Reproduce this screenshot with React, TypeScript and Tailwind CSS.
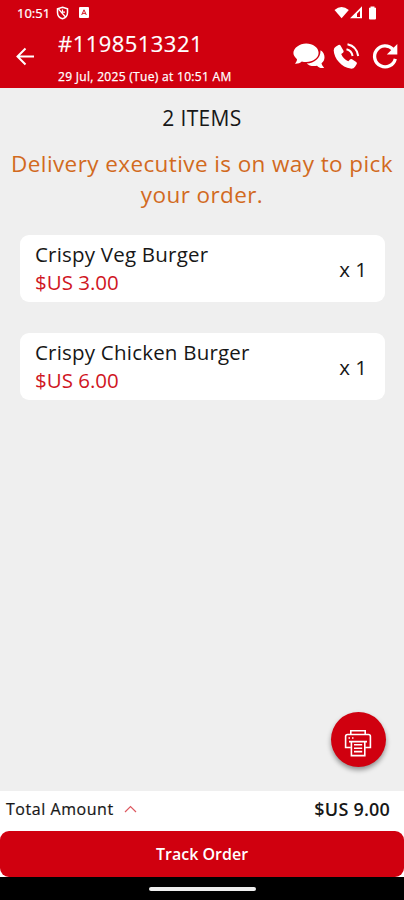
import React from 'react';

const items = [
  { name: 'Crispy Veg Burger', price: '$US 3.00', qty: 'x 1' },
  { name: 'Crispy Chicken Burger', price: '$US 6.00', qty: 'x 1' },
];

function StatusBar() {
  return (
    <div className="flex h-[25px] items-center pl-[17px] pr-[26px] text-white">
      <span className="w-[34px] whitespace-nowrap font-['Noto_Sans'] text-[13px] leading-[18px] [-webkit-text-stroke:0.2px_white]">10:51</span>
      <svg className="ml-[5px]" width="13" height="14" viewBox="0 0 13 14" fill="none" stroke="white" strokeWidth="1.5">
        <path d="M6.5 1.2 11.5 2.8V6.4C11.5 9.5 9.4 11.8 6.5 12.8 3.6 11.8 1.5 9.5 1.5 6.4V2.8Z" />
        <path d="M2.5 3 9.5 11M6.5 3.5V6.2H9" strokeWidth="1.2" />
      </svg>
      <svg className="ml-[10px]" width="10" height="11" viewBox="0 0 10 11">
        <rect width="10" height="11" rx="1" fill="white" />
        <path d="M2.7 8 5 2.8 7.3 8M3.5 6.4H6.5" stroke="#d0000f" strokeWidth="0.9" fill="none" />
      </svg>
      <svg className="ml-auto" width="44" height="14" viewBox="0 0 44 14" fill="white">
        <path d="M.5 4Q7.5-1.8 14.8 4L7.6 12.3Z" />
        <path fillRule="evenodd" d="M16 12.3 28 .3V12.3ZM23 7.8V11H26V4.8Z" />
        <path d="M36.5.5H40.5V1.8H42V12.5Q42 13.5 41 13.5H36Q35 13.5 35 12.5V1.8H36.5Z" />
      </svg>
    </div>
  );
}

function Header() {
  return (
    <header className="h-[88px] shrink-0 bg-[#d0000f] text-white">
      <StatusBar />
      <div className="flex h-[63px]">
        <svg className="ml-[16px] mt-[22px] shrink-0" width="19" height="19" viewBox="0 0 19 19" fill="none" stroke="white" strokeWidth="2">
          <path d="M18 9.5H2M9.5 1.5 1.5 9.5 9.5 17.5" />
        </svg>
        <div className="ml-[23px] whitespace-nowrap">
          <div className="mt-[3px] text-[22px] leading-[30px] tracking-[0.45px] [-webkit-text-stroke:0.15px_white]">#1198513321</div>
          <div className="mt-[11px] text-[12px] leading-[16px] tracking-[0.31px] [-webkit-text-stroke:0.25px_white]">29 Jul, 2025 (Tue) at 10:51 AM</div>
        </div>
        <div className="ml-auto mr-[6px] flex shrink-0 items-start pt-[17px]">
          <svg className="mt-px" width="32" height="27" viewBox="0 0 32 27" fill="white">
            <path d="M27.5 7.2C32.5 10 32.8 17.2 28.5 20.2 28.8 22 30 23.5 31.2 24.8 28.5 25.6 25.8 24.8 24 22.8 19.8 23.7 15.7 22.6 13.7 20.5 21.5 20 27.8 15.2 27.5 7.2Z" />
            <path d="M13.2 .5C19.8 .5 25.6 4.5 25.6 9.8S19.8 19 13.2 19C11.7 19 10.2 18.8 8.8 18.4 6.9 20 4.5 20.9 1.8 20.6 3.2 19.4 4 17.8 4 16.2 2.1 14.5.4 12.4.4 10 .4 5 6.6.5 13.2.5Z" />
          </svg>
          <svg className="ml-[8px]" width="28" height="28" viewBox="0 0 28 28" fill="white">
            <path d="M3 4.5 5.5 3Q6.8 2.4 7.5 3.6L10.5 8.8Q11 10 10 10.7L8.2 12C9.3 14.9 12.1 17.8 15.3 19.2L17 17.5Q17.8 16.7 19 17.3L23.2 20Q24.4 20.8 23.7 22L22 24.7Q20.6 27 17.5 26.6C8.8 25.4.9 16.5.7 8.2Q.8 5.8 3 4.5Z" />
            <path d="M13.5 7.3Q18.6 8.6 19.6 14M14.5 2.2Q23.8 4.2 25.2 14" stroke="white" strokeWidth="2" fill="none" />
          </svg>
          <svg className="ml-[10px]" width="27" height="28" viewBox="0 0 27 28" fill="none">
            <path d="M24.3 16.8A10.5 10.5 0 1 1 21.8 7.2" stroke="white" strokeWidth="3.3" />
            <path d="M26.3 2V12.5H15.8Z" fill="white" />
          </svg>
        </div>
      </div>
    </header>
  );
}

function PrinterIcon() {
  return (
    <svg width="28" height="28" viewBox="0 0 28 28" fill="none" stroke="white" strokeWidth="1.6">
      <path d="M6.8 5.5V1.7H21.2V5.5M6.8 18.5H1.6V7.5Q1.6 5.5 3.6 5.5H24.4Q26.4 5.5 26.4 7.5V18.5H21.2" />
      <path d="M5 12.6H23M7.4 12.6V26.6H20.8V12.6M10 15.8H18.2M10 19.2H18.2M10 22.6H18.2M4.5 9H6M8 9H9.5" />
    </svg>
  );
}

export default function App() {
  return (
    <div className="relative flex h-[900px] w-[404px] flex-col overflow-hidden bg-[#efefef] font-['Open_Sans','Noto_Sans',sans-serif] text-[#171717]">
      <Header />
      <main className="flex-1">
        <h1 className="mt-[15px] text-center text-[21px] leading-[30px] tracking-[0.35px]">2 ITEMS</h1>
        <p className="mt-[15px] whitespace-nowrap text-center text-[22.5px] leading-[31px] tracking-[0.4px] text-[#d26a1e]">
          Delivery executive is on way to pick<br />your order.
        </p>
        <div className="ml-[20px] mr-[19px] mt-[25px] flex flex-col gap-[31px]">
          {items.map((item) => (
            <section key={item.name} className="flex h-[67px] items-center justify-between rounded-[9px] bg-white pl-[15px] pr-[18px] text-[20.5px] leading-[28px]">
              <div className="pb-px">
                <div className="tracking-[0.21px]">{item.name}</div>
                <div className="text-[#d0161f]">{item.price}</div>
              </div>
              <span>{item.qty}</span>
            </section>
          ))}
        </div>
      </main>
      <button aria-label="Print order" className="absolute left-[331px] top-[712px] flex h-[55px] w-[55px] items-center justify-center rounded-full bg-[#d0000f] pt-[6px] pr-px shadow-[0_3px_5px_rgba(0,0,0,0.4)]">
        <PrinterIcon />
      </button>
      <footer className="shrink-0 bg-white">
        <div className="flex h-[40px] items-center pb-[4px] pl-[6px] pr-[14px]">
          <span className="w-[108px] whitespace-nowrap text-[16px] leading-[22px] tracking-[0.55px] [-webkit-text-stroke:0.2px_#171717]">Total Amount</span>
          <svg className="ml-[10px]" width="13" height="8" viewBox="0 0 13 8" fill="none" stroke="#dd5960" strokeWidth="1.2">
            <path d="M1 7 6.5 1.5 12 7" />
          </svg>
          <span className="ml-auto text-[18px] font-semibold leading-[24px] tracking-[0.2px]">$US 9.00</span>
        </div>
        <button className="block h-[46px] w-full rounded-[9px] bg-[#d0000f] text-center text-[16px] font-semibold leading-[46px] text-white">Track Order</button>
        <div className="flex h-[23px] items-center justify-center bg-black">
          <div className="h-[4px] w-[107px] rounded-full bg-[#eeeeee]" />
        </div>
      </footer>
    </div>
  );
}
